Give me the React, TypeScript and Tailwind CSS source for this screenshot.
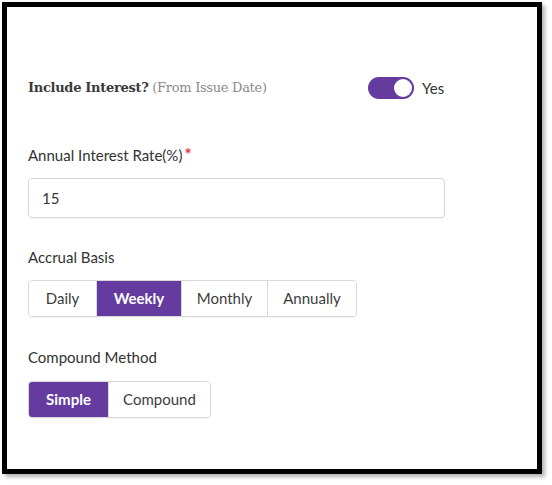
import React, { useState } from "react";

const lato = { fontFamily: "Lato, 'Open Sans', sans-serif" };

function Segmented({
  options,
  value,
  onChange,
}: {
  options: { label: string; w: string }[];
  value: string;
  onChange: (v: string) => void;
}) {
  return (
    <div className="flex h-[37px] w-fit rounded-[4px] border border-[#d9d9d9] shadow-[0_1px_1px_rgba(0,0,0,0.05)]">
      {options.map((o, i) => {
        const active = o.label === value;
        return (
          <button
            key={o.label}
            onClick={() => onChange(o.label)}
            className={
              "flex items-center justify-center text-[15px] " +
              o.w +
              (i > 0 ? " border-l border-[#d9d9d9]" : "") +
              (i === 0 ? " rounded-l-[3px]" : "") +
              (i === options.length - 1 ? " rounded-r-[3px]" : "") +
              (active ? " bg-[#653ba0] font-bold text-white" : " bg-white text-[#3d3d3d]")
            }
          >
            {o.label}
          </button>
        );
      })}
    </div>
  );
}

export default function App() {
  const [on, setOn] = useState(true);
  const [basis, setBasis] = useState("Weekly");
  const [method, setMethod] = useState("Simple");

  return (
    <div className="min-h-[485px] w-[552px] bg-white pl-[2px] pt-[2px]" style={lato}>
      <div className="h-[472px] w-[540px] border-[5px] border-black bg-white pl-[21px] shadow-[3px_3px_4px_rgba(0,0,0,0.3)]">
        {/* Include interest toggle */}
        <div className="mt-[70px] flex h-[22px] items-center">
          <div
            className="w-[340px] text-[13px] tracking-[-0.3px] text-[#3a3a3a]"
            style={{ fontFamily: "'DejaVu Serif', serif" }}
          >
            <span className="font-bold">Include Interest?</span>{" "}
            <span className="text-[#8a8a8a]">(From Issue Date)</span>
          </div>
          <button
            onClick={() => setOn(!on)}
            className={
              "flex h-[22px] w-[46px] items-center rounded-full px-[2px] " +
              (on ? "justify-end bg-[#653ba0]" : "justify-start bg-[#cccccc]")
            }
          >
            <span className="h-[18px] w-[18px] rounded-full bg-white" />
          </button>
          <span className="ml-[8px] text-[15px] text-[#333]">{on ? "Yes" : "No"}</span>
        </div>

        {/* Rate */}
        <div className="mt-[46px] h-[20px] text-[15px] leading-[20px] text-[#333]">
          Annual Interest Rate(%)<span className="ml-[2px] text-[17px] font-bold text-[#e53935]">*</span>
        </div>
        <input
          defaultValue="15"
          className="mt-[13px] h-[40px] w-[417px] rounded-[4px] border border-[#d6d6d6] px-[13px] text-[15px] text-[#333] shadow-[0_1px_1px_rgba(0,0,0,0.05)] outline-none"
        />

        {/* Accrual basis */}
        <div className="mt-[29px] h-[20px] text-[15px] leading-[20px] text-[#333]">Accrual Basis</div>
        <div className="mt-[13px]">
          <Segmented
            value={basis}
            onChange={setBasis}
            options={[
              { label: "Daily", w: "w-[67px]" },
              { label: "Weekly", w: "w-[85px]" },
              { label: "Monthly", w: "w-[86px]" },
              { label: "Annually", w: "w-[89px]" },
            ]}
          />
        </div>

        {/* Compound method */}
        <div className="mt-[30px] h-[20px] text-[15px] leading-[20px] text-[#333]">Compound Method</div>
        <div className="mt-[14px]">
          <Segmented
            value={method}
            onChange={setMethod}
            options={[
              { label: "Simple", w: "w-[79px]" },
              { label: "Compound", w: "w-[102px]" },
            ]}
          />
        </div>
      </div>
    </div>
  );
}
